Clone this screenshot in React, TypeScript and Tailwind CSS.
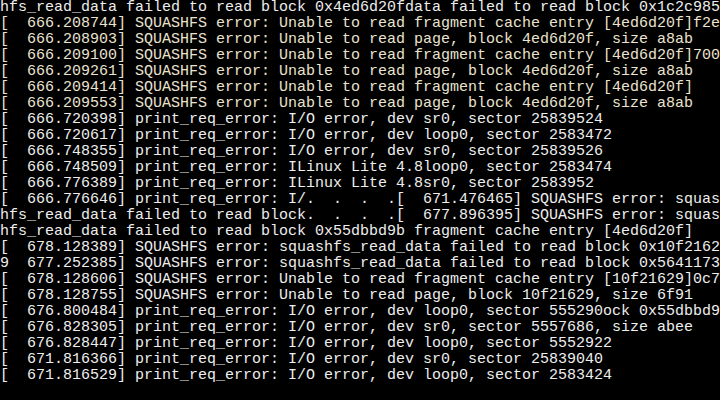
const warm = "text-[#ebe3cf]";
const cool = "text-[#eeeeee]";

const lines: ReadonlyArray<{ text: string; tone: string }> = [
  { text: "hfs_read_data failed to read block 0x4ed6d20fdata failed to read block 0x1c2c985", tone: cool },
  { text: "[  666.208744] SQUASHFS error: Unable to read fragment cache entry [4ed6d20f]f2e", tone: warm },
  { text: "[  666.208903] SQUASHFS error: Unable to read page, block 4ed6d20f, size a8ab", tone: warm },
  { text: "[  666.209100] SQUASHFS error: Unable to read fragment cache entry [4ed6d20f]700", tone: warm },
  { text: "[  666.209261] SQUASHFS error: Unable to read page, block 4ed6d20f, size a8ab", tone: warm },
  { text: "[  666.209414] SQUASHFS error: Unable to read fragment cache entry [4ed6d20f]", tone: warm },
  { text: "[  666.209553] SQUASHFS error: Unable to read page, block 4ed6d20f, size a8ab", tone: warm },
  { text: "[  666.720398] print_req_error: I/O error, dev sr0, sector 25839524", tone: cool },
  { text: "[  666.720617] print_req_error: I/O error, dev loop0, sector 2583472", tone: cool },
  { text: "[  666.748355] print_req_error: I/O error, dev sr0, sector 25839526", tone: cool },
  { text: "[  666.748509] print_req_error: ILinux Lite 4.8loop0, sector 2583474", tone: cool },
  { text: "[  666.776389] print_req_error: ILinux Lite 4.8sr0, sector 2583952", tone: cool },
  { text: "[  666.776646] print_req_error: I/.  .  .  .[  671.476465] SQUASHFS error: squas", tone: cool },
  { text: "hfs_read_data failed to read block.  .  .  .[  677.896395] SQUASHFS error: squas", tone: cool },
  { text: "hfs_read_data failed to read block 0x55dbbd9b fragment cache entry [4ed6d20f]", tone: cool },
  { text: "[  678.128389] SQUASHFS error: squashfs_read_data failed to read block 0x10f2162", tone: cool },
  { text: "9  677.252385] SQUASHFS error: squashfs_read_data failed to read block 0x5641173", tone: cool },
  { text: "[  678.128606] SQUASHFS error: Unable to read fragment cache entry [10f21629]0c7", tone: cool },
  { text: "[  678.128755] SQUASHFS error: Unable to read page, block 10f21629, size 6f91", tone: cool },
  { text: "[  676.800484] print_req_error: I/O error, dev loop0, sector 555290ock 0x55dbbd9", tone: cool },
  { text: "[  676.828305] print_req_error: I/O error, dev sr0, sector 5557686, size abee", tone: cool },
  { text: "[  676.828447] print_req_error: I/O error, dev loop0, sector 5552922", tone: cool },
  { text: "[  671.816366] print_req_error: I/O error, dev sr0, sector 25839040", tone: cool },
  { text: "[  671.816529] print_req_error: I/O error, dev loop0, sector 2583424", tone: cool },
  { text: "", tone: cool },
];

export default function App() {
  return (
    <div className="h-[400px] w-[720px] overflow-hidden bg-black font-['Liberation_Mono',_monospace] text-[15px] leading-4">
      {lines.map((line, index) => (
        <div key={index} className={`h-4 whitespace-pre ${line.tone}`}>
          {line.text}
        </div>
      ))}
    </div>
  );
}
